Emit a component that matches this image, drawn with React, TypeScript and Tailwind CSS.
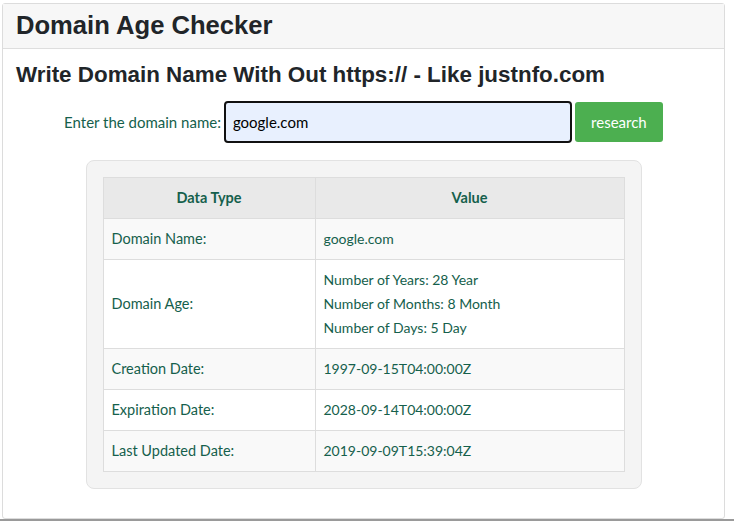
export default function App() {
    const rows: { label: string; value: string[] }[] = [
        { label: "Domain Name:", value: ["google.com"] },
        {
            label: "Domain Age:",
            value: ["Number of Years: 28 Year", "Number of Months: 8 Month", "Number of Days: 5 Day"],
        },
        { label: "Creation Date:", value: ["1997-09-15T04:00:00Z"] },
        { label: "Expiration Date:", value: ["2028-09-14T04:00:00Z"] },
        { label: "Last Updated Date:", value: ["2019-09-09T15:39:04Z"] },
    ]

    return (
        <div className="w-[734px] h-[522px] bg-white overflow-hidden font-['Liberation_Sans',Arial,sans-serif]">
            <div className="ml-[2px] mt-[3px] w-[723px] h-[516px] border border-[#dcdcdc] rounded-[3px] flex flex-col">
                <div className="h-[45px] bg-[#f7f7f7] border-b border-[#dedede] px-[13px] flex items-center">
                    <h1 className="text-[25.6px] font-bold text-[#212529] leading-none">Domain Age Checker</h1>
                </div>
                <div className="px-[13px] pt-[13px]">
                    <h2 className="text-[22.4px] font-bold text-[#212529] leading-[26px]">
                        Write Domain Name With Out https:// - Like justnfo.com
                    </h2>
                </div>
                <div className="font-['Lato','Open_Sans',sans-serif] text-[#15604c] text-[14px]">
                    <div className="flex justify-center items-center mt-[13px]">
                        <label className="mr-[3px] text-[15px]">Enter the domain name:</label>
                        <div className="w-[348px] h-[42px] bg-[#e8f0fe] border-2 border-[#111] rounded-[4px] flex items-center px-[7px] text-[15px] text-black">
                            google.com
                        </div>
                        <button className="ml-[3px] w-[88px] h-[40px] bg-[#4caf50] text-white rounded-[3px] text-[15px]">
                            research
                        </button>
                    </div>
                    <div className="mx-auto mt-[17px] w-[556px] bg-[#f4f4f4] border border-[#e2e2e2] rounded-[8px] p-[16px]">
                        <table className="w-full border-collapse text-[14.5px]">
                            <thead>
                                <tr className="bg-[#e9e9e9]">
                                    <th className="w-[212px] h-[41px] border border-[#dddddd] font-bold">Data Type</th>
                                    <th className="border border-[#dddddd] font-bold">Value</th>
                                </tr>
                            </thead>
                            <tbody>
                                {rows.map((r, i) => (
                                    <tr key={r.label} className={i % 2 === 0 ? "bg-[#f9f9f9]" : "bg-white"}>
                                        <td className="border border-[#dddddd] px-[8px] h-[41px] leading-[20px]">{r.label}</td>
                                        <td className="border border-[#dddddd] px-[8px] py-[8px] leading-[24px] text-[14px]">
                                            {r.value.map((v) => (
                                                <div key={v} className={r.value.length > 1 ? "" : "leading-[20px]"}>
                                                    {v}
                                                </div>
                                            ))}
                                        </td>
                                    </tr>
                                ))}
                            </tbody>
                        </table>
                    </div>
                </div>
            </div>
            <div className="border-t-2 border-[#9a9a9a]" />
        </div>
    )
}
